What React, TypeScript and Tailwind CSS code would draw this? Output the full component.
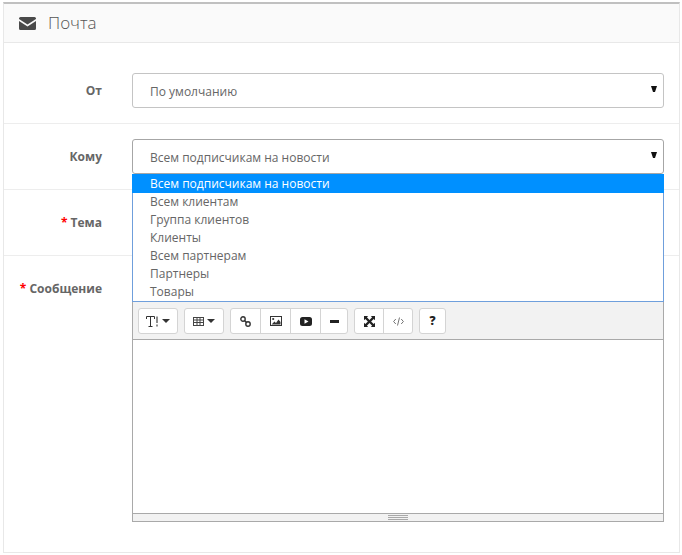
import { ReactNode } from "react";

const audiences = ["Всем клиентам", "Группа клиентов", "Клиенты", "Всем партнерам", "Партнеры", "Товары"];

function Caret() {
  return (
    <svg width="8" height="4" viewBox="0 0 8 4" className="ml-[3px]">
      <polygon points="0,0 8,0 4,4" fill="#333333" />
    </svg>
  );
}

function SelectBox({ value, dark }: { value: string; dark?: boolean }) {
  return (
    <div className={`flex h-[35px] items-center justify-between rounded-[3px] border bg-white pl-[17px] pr-[6px] ${dark ? "border-[#a6a6a6]" : "border-[#c4c4c4]"}`}>
      <span className="pt-[2px]">{value}</span>
      <svg width="6" height="6" viewBox="0 0 6 6" className="mb-[3px]">
        <polygon points="0,0 6,0 4,6 2,6" fill="#111111" />
      </svg>
    </div>
  );
}

function Label({ text, required }: { text: string; required?: boolean }) {
  return (
    <div className="w-[83px] shrink-0 pt-[9px] text-right font-bold leading-[18px] whitespace-nowrap">
      {required && <span className="text-[#ff0000]">* </span>}
      {text}
    </div>
  );
}

function ToolButton({ children, w, last }: { children: ReactNode; w: string; last?: boolean }) {
  return (
    <div className={`flex h-full items-center justify-center text-[#222] ${w} ${last ? "" : "border-r border-[#d4d4d4]"}`}>
      {children}
    </div>
  );
}

function ToolGroup({ children }: { children: ReactNode }) {
  return <div className="flex h-[26px] rounded-[3px] border border-[#d4d4d4] bg-white">{children}</div>;
}

export default function App() {
  return (
    <div className="h-[555px] w-[682px] overflow-hidden bg-white pl-[3px] pt-[2px] font-['Open_Sans',sans-serif] text-[12px] text-[#666666]">
      <div className="h-[551px] w-[677px] border-x border-b border-t-2 border-x-[#e8e8e8] border-b-[#e8e8e8] border-t-[#c0c0c0]">
        <div className="flex h-[39px] items-center border-b border-[#e8e8e8] bg-[#fafafa] pl-[15px]">
          <svg width="17" height="13" viewBox="0 0 17 13">
            <path d="M1.5 0H15.5Q17 0 17 1.5V2L8.5 7.5L0 2V1.5Q0 0 1.5 0Z" fill="#4a4a4a" />
            <path d="M0 4L8.5 9.5L17 4V11.5Q17 13 15.5 13H1.5Q0 13 0 11.5Z" fill="#4a4a4a" />
          </svg>
          <span className="ml-[12px] text-[17px] font-light text-[#555555]">Почта</span>
        </div>

        <div className="flex border-b border-[#ededed] pb-[15px] pl-[15px] pt-[30px]">
          <Label text="От" />
          <div className="ml-[30px] w-[532px]">
            <SelectBox value="По умолчанию" />
          </div>
        </div>

        <div className="flex border-b border-[#ededed] py-[15px] pl-[15px]">
          <Label text="Кому" />
          <div className="relative ml-[30px] w-[532px]">
            <SelectBox value="Всем подписчикам на новости" dark />
            <div className="absolute left-0 top-full z-10 w-full border-x border-b border-[#6f9fdc] bg-white">
              <div className="-mx-px h-[19px] bg-[#0090ff] pl-[18px] leading-[19px] text-white">Всем подписчикам на новости</div>
              {audiences.map((item) => (
                <div key={item} className="h-[18px] pl-[17px] leading-[18px]">
                  {item}
                </div>
              ))}
            </div>
          </div>
        </div>

        <div className="flex border-b border-[#ededed] py-[15px] pl-[15px]">
          <Label text="Тема" required />
          <div className="ml-[30px] h-[35px] w-[532px] rounded-[3px] border border-[#c4c4c4]" />
        </div>

        <div className="flex pl-[15px] pt-[15px]">
          <Label text="Сообщение" required />
          <div className="ml-[30px] w-[532px] border border-[#a9a9a9]">
            <div className="flex h-[68px] items-start gap-[6px] border-b border-[#a9a9a9] bg-[#f2f2f2] pl-[5px] pt-[36px]">
              <ToolGroup>
                <ToolButton w="w-[38px]" last>
                  <svg width="13" height="11" viewBox="0 0 13 11" fill="none" stroke="#333333" strokeWidth="1">
                    <path d="M0.5 3V0.5H8.5V3M4.5 0.5V10.5M2.5 10.5H6.5" />
                    <path d="M11 0.5V7M11 8.5V10.5" stroke="#444444" strokeWidth="1.2" />
                  </svg>
                  <Caret />
                </ToolButton>
              </ToolGroup>
              <ToolGroup>
                <ToolButton w="w-[38px]" last>
                  <svg width="11" height="9" viewBox="0 0 11 9" fill="none" stroke="#444444" strokeWidth="1">
                    <rect x="0.5" y="0.5" width="10" height="8" />
                    <path d="M0 3H11M0 5.5H11M4 0V9M7 0V9" />
                  </svg>
                  <Caret />
                </ToolButton>
              </ToolGroup>
              <ToolGroup>
                <ToolButton w="w-[30px]">
                  <svg width="11" height="11" viewBox="0 0 11 11" fill="none" stroke="#333333" strokeWidth="1.4">
                    <circle cx="3" cy="3" r="2.2" />
                    <circle cx="8" cy="8" r="2.2" />
                    <path d="M4.5 4.5L6.5 6.5" />
                  </svg>
                </ToolButton>
                <ToolButton w="w-[30px]">
                  <svg width="12" height="10" viewBox="0 0 12 10">
                    <rect x="0.5" y="0.5" width="11" height="9" fill="none" stroke="#333333" />
                    <circle cx="3.2" cy="3" r="1.1" fill="#333333" />
                    <path d="M1.5 8.5L4.5 5.5L6 7L8.5 3.5L10.5 6V8.5Z" fill="#333333" />
                  </svg>
                </ToolButton>
                <ToolButton w="w-[30px]">
                  <svg width="12" height="9" viewBox="0 0 12 9">
                    <path fillRule="evenodd" d="M2.5 0H9.5Q12 0 12 2.5V6.5Q12 9 9.5 9H2.5Q0 9 0 6.5V2.5Q0 0 2.5 0ZM4.5 2.2V6.8L8.5 4.5Z" fill="#222222" />
                  </svg>
                </ToolButton>
                <ToolButton w="w-[26px]" last>
                  <div className="h-[3px] w-[9px] bg-[#222222]" />
                </ToolButton>
              </ToolGroup>
              <ToolGroup>
                <ToolButton w="w-[29px]">
                  <svg width="11" height="11" viewBox="0 0 11 11">
                    <path d="M0 0H4.2L2.9 1.3L5.5 3.9L8.1 1.3L6.8 0H11V4.2L9.7 2.9L7.1 5.5L9.7 8.1L11 6.8V11H6.8L8.1 9.7L5.5 7.1L2.9 9.7L4.2 11H0V6.8L1.3 8.1L3.9 5.5L1.3 2.9L0 4.2Z" fill="#222222" />
                  </svg>
                </ToolButton>
                <ToolButton w="w-[28px]" last>
                  <svg width="11" height="9" viewBox="0 0 11 9" fill="none" stroke="#666666" strokeWidth="0.9">
                    <path d="M2.8 2L0.6 4.5L2.8 7M8.2 2L10.4 4.5L8.2 7M6.5 0.5L4.5 8.5" />
                  </svg>
                </ToolButton>
              </ToolGroup>
              <ToolGroup>
                <ToolButton w="w-[25px]" last>
                  <span className="text-[12px] font-extrabold text-[#222222]">?</span>
                </ToolButton>
              </ToolGroup>
            </div>
            <div className="h-[173px] bg-white" />
            <div className="flex h-[8px] flex-col items-center justify-center gap-px border-t border-[#a9a9a9] bg-[#f2f2f2]">
              <div className="h-px w-[20px] bg-[#a9a9a9]" />
              <div className="h-px w-[20px] bg-[#a9a9a9]" />
              <div className="h-px w-[20px] bg-[#a9a9a9]" />
            </div>
          </div>
        </div>
      </div>
    </div>
  );
}
